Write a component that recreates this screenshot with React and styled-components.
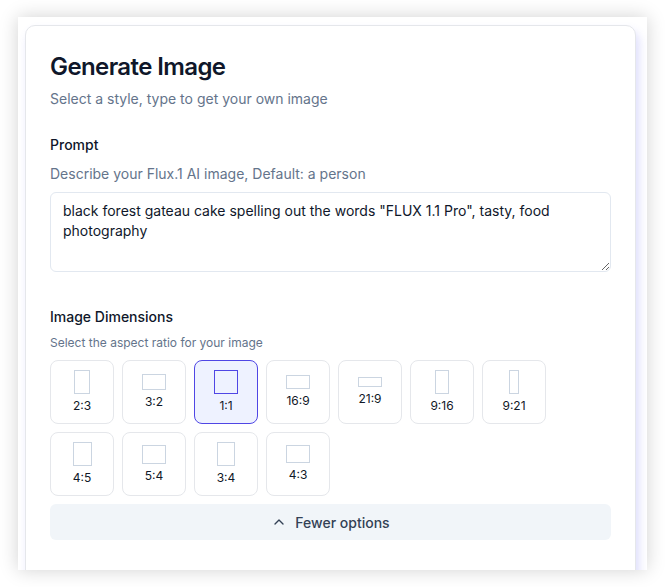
import React, { useState } from "react"
import styled, { createGlobalStyle } from "styled-components"
import { ChevronUp } from "lucide-react"

const GlobalStyle = createGlobalStyle`
  html, body {
    margin: 0;
    padding: 0;
    background: #ffffff;
    font-family: Inter, "Noto Sans", "Liberation Sans", sans-serif;
    -webkit-font-smoothing: antialiased;
  }
`

const Frame = styled.div`
  box-sizing: border-box;
  margin: 17px 18px;
  height: 553px;
  padding: 8px 11px 0 7px;
  overflow: hidden;
  background: #ffffff;
  box-shadow: 0 0 18px rgba(0, 0, 0, 0.18);
`

const Card = styled.section`
  box-sizing: border-box;
  padding: 25px 24px 40px;
  background: #ffffff;
  border: 1px solid #e5e7eb;
  border-radius: 10px;
  box-shadow: 3px 6px 10px rgba(99, 102, 241, 0.22);
`

const Title = styled.h1`
  margin: 0;
  font-size: 24px;
  line-height: 32px;
  font-weight: 600;
  letter-spacing: -0.025em;
  color: #0f172a;
`

const Subtitle = styled.p`
  margin: 6px 0 0;
  font-size: 14px;
  line-height: 20px;
  color: #64748b;
`

const Field = styled.div`
  display: flex;
  flex-direction: column;
  margin-top: ${props => props.$top}px;
`

const Label = styled.label`
  font-size: 14px;
  line-height: 20px;
  font-weight: 500;
  color: #0f172a;
`

const Hint = styled.p`
  margin: ${props => props.$gap}px 0 0;
  font-size: ${props => props.$size}px;
  line-height: ${props => (props.$size === 12 ? 16 : 20)}px;
  color: #64748b;
`

const Prompt = styled.textarea`
  box-sizing: border-box;
  margin-top: 8px;
  width: 100%;
  height: 80px;
  padding: 8px 12px;
  border: 1px solid #e2e8f0;
  border-radius: 6px;
  font-family: inherit;
  font-size: 14px;
  line-height: 20px;
  color: #0f172a;
  background: #ffffff;
  resize: vertical;
  outline: none;
`

const RatioGrid = styled.div`
  display: grid;
  grid-template-columns: repeat(7, 64px);
  gap: 8px;
  margin-top: 9px;
`

const RatioButton = styled.button`
  box-sizing: border-box;
  display: flex;
  flex-direction: column;
  align-items: center;
  justify-content: center;
  gap: 4px;
  width: 64px;
  height: 64px;
  padding: 0;
  border: 1px solid ${props => (props.$active ? "#4f46e5" : "#e5e7eb")};
  border-radius: 8px;
  background: ${props => (props.$active ? "#eef2ff" : "#ffffff")};
  font-family: inherit;
  cursor: pointer;
`

const Shape = styled.span`
  box-sizing: border-box;
  display: block;
  border: 1px solid ${props => (props.$active ? "#4f46e5" : "#cbd5e1")};
`

const RatioText = styled.span`
  font-size: 12px;
  line-height: 16px;
  color: #111827;
`

const ToggleButton = styled.button`
  display: flex;
  align-items: center;
  justify-content: center;
  gap: 8px;
  width: 100%;
  height: 36px;
  margin-top: 8px;
  border: none;
  border-radius: 6px;
  background: #f1f5f9;
  font-family: inherit;
  font-size: 14px;
  font-weight: 500;
  color: #334155;
  cursor: pointer;
`

const ratios = ["2:3", "3:2", "1:1", "16:9", "21:9", "9:16", "9:21", "4:5", "5:4", "3:4", "4:3"]

const shapeSize = ratio => {
  const [w, h] = ratio.split(":").map(Number)
  const scale = 24 / Math.max(w, h)
  return { width: Math.round(w * scale), height: Math.round(h * scale) }
}

export default function App() {
  const [selected, setSelected] = useState("1:1")

  return (
    <>
      <GlobalStyle />
      <Frame>
        <Card>
          <Title>Generate Image</Title>
          <Subtitle>Select a style, type to get your own image</Subtitle>

          <Field $top={26}>
            <Label htmlFor="prompt">Prompt</Label>
            <Hint $gap={9} $size={14}>
              Describe your Flux.1 AI image, Default: a person
            </Hint>
            <Prompt
              id="prompt"
              defaultValue={'black forest gateau cake spelling out the words "FLUX 1.1 Pro", tasty, food photography'}
            />
          </Field>

          <Field $top={35}>
            <Label>Image Dimensions</Label>
            <Hint $gap={8} $size={12}>
              Select the aspect ratio for your image
            </Hint>
            <RatioGrid>
              {ratios.map(ratio => {
                const active = ratio === selected
                return (
                  <RatioButton
                    key={ratio}
                    $active={active}
                    onClick={() => setSelected(ratio)}
                  >
                    <Shape $active={active} style={shapeSize(ratio)} />
                    <RatioText>{ratio}</RatioText>
                  </RatioButton>
                )
              })}
            </RatioGrid>
            <ToggleButton>
              <ChevronUp size={16} strokeWidth={2} />
              Fewer options
            </ToggleButton>
          </Field>
        </Card>
      </Frame>
    </>
  )
}
